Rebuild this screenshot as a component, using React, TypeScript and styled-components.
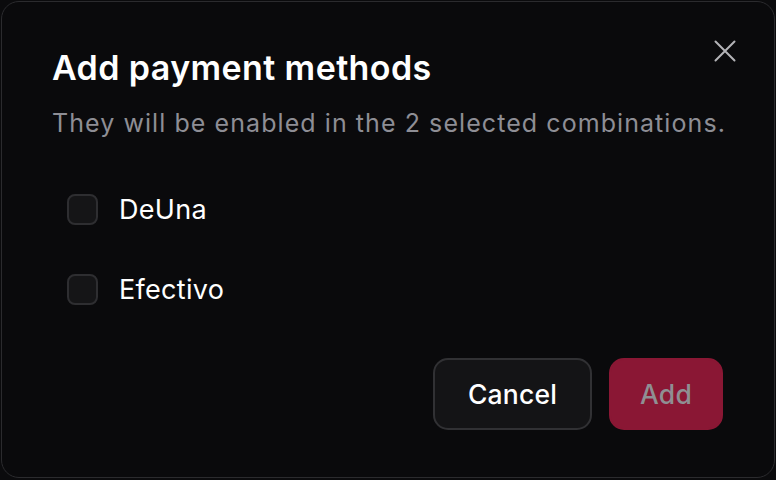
import React, { useState } from 'react'
import styled, { createGlobalStyle } from 'styled-components'

const GlobalStyle = createGlobalStyle`
  html, body {
    margin: 0;
    padding: 0;
    background: #0b0b0d;
    font-family: Inter, "Noto Sans", sans-serif;
  }
  * { box-sizing: border-box; }
`

const Overlay = styled.div`
  width: 776px;
  height: 480px;
  padding: 1px 1px 2px 1px;
  background: #0b0b0d;
`

const Dialog = styled.div`
  position: relative;
  height: 100%;
  background: #0a0a0c;
  border: 1px solid #2b2b2e;
  border-radius: 18px;
  padding: 45px 51px 0 50px;
  display: flex;
  flex-direction: column;
`

const Title = styled.h2`
  margin: 0;
  font-size: 34px;
  line-height: 42px;
  font-weight: 600;
  color: #ffffff;
  letter-spacing: 0.4px;
`

const Subtitle = styled.p`
  margin: 18px 0 0;
  font-size: 25px;
  line-height: 32px;
  color: #8e8e95;
  letter-spacing: 1.07px;
  white-space: nowrap;
`

const CloseButton = styled.button`
  position: absolute;
  top: 37px;
  right: 37px;
  width: 24px;
  height: 24px;
  padding: 0;
  border: none;
  background: none;
  cursor: pointer;
  display: flex;
  align-items: center;
  justify-content: center;
`

const List = styled.div`
  margin-top: 55px;
  padding-left: 15px;
  display: flex;
  flex-direction: column;
  gap: 49px;
`

const Row = styled.label`
  display: flex;
  align-items: center;
  gap: 21px;
  cursor: pointer;
`

const Box = styled.span<{ $checked: boolean }>`
  width: 31px;
  height: 31px;
  border-radius: 8px;
  border: 2px solid #2e2e31;
  background: ${(p) => (p.$checked ? '#8a1734' : '#151517')};
  display: flex;
  align-items: center;
  justify-content: center;
`

const Label = styled.span`
  font-size: 27px;
  line-height: 31px;
  color: #ffffff;
  letter-spacing: 0.3px;
`

const Footer = styled.div`
  margin-top: 53px;
  display: flex;
  justify-content: flex-end;
  gap: 17px;
`

const ActionButton = styled.button<{ $primary?: boolean }>`
  height: 72px;
  padding: 0 ${(p) => (p.$primary ? '29px' : '33px')};
  border-radius: 15px;
  font-family: Inter, "Noto Sans", sans-serif;
  font-size: 26.5px;
  font-weight: 500;
  letter-spacing: 0.2px;
  border: 2px solid ${(p) => (p.$primary ? '#8a1734' : '#313134')};
  background: ${(p) => (p.$primary ? '#8a1734' : '#141416')};
  color: ${(p) => (p.$primary ? '#8f8f93' : '#ffffff')};
  cursor: pointer;
`

const methods = ['DeUna', 'Efectivo']

export default function App() {
  const [selected, setSelected] = useState<string[]>([])

  const toggle = (m: string) =>
    setSelected((s) => (s.includes(m) ? s.filter((x) => x !== m) : [...s, m]))

  return (
    <>
      <GlobalStyle />
      <Overlay>
        <Dialog>
          <CloseButton aria-label='Close'>
            <svg width='22' height='22' viewBox='0 0 22 22'>
              <path d='M1.5 1.5 L20.5 20.5 M20.5 1.5 L1.5 20.5' stroke='#b4b4b8' strokeWidth='2' strokeLinecap='round' />
            </svg>
          </CloseButton>
          <Title>Add payment methods</Title>
          <Subtitle>They will be enabled in the 2 selected combinations.</Subtitle>
          <List>
            {methods.map((m) => (
              <Row key={m} onClick={() => toggle(m)}>
                <Box $checked={selected.includes(m)} />
                <Label>{m}</Label>
              </Row>
            ))}
          </List>
          <Footer>
            <ActionButton>Cancel</ActionButton>
            <ActionButton $primary disabled={selected.length === 0}>
              Add
            </ActionButton>
          </Footer>
        </Dialog>
      </Overlay>
    </>
  )
}
